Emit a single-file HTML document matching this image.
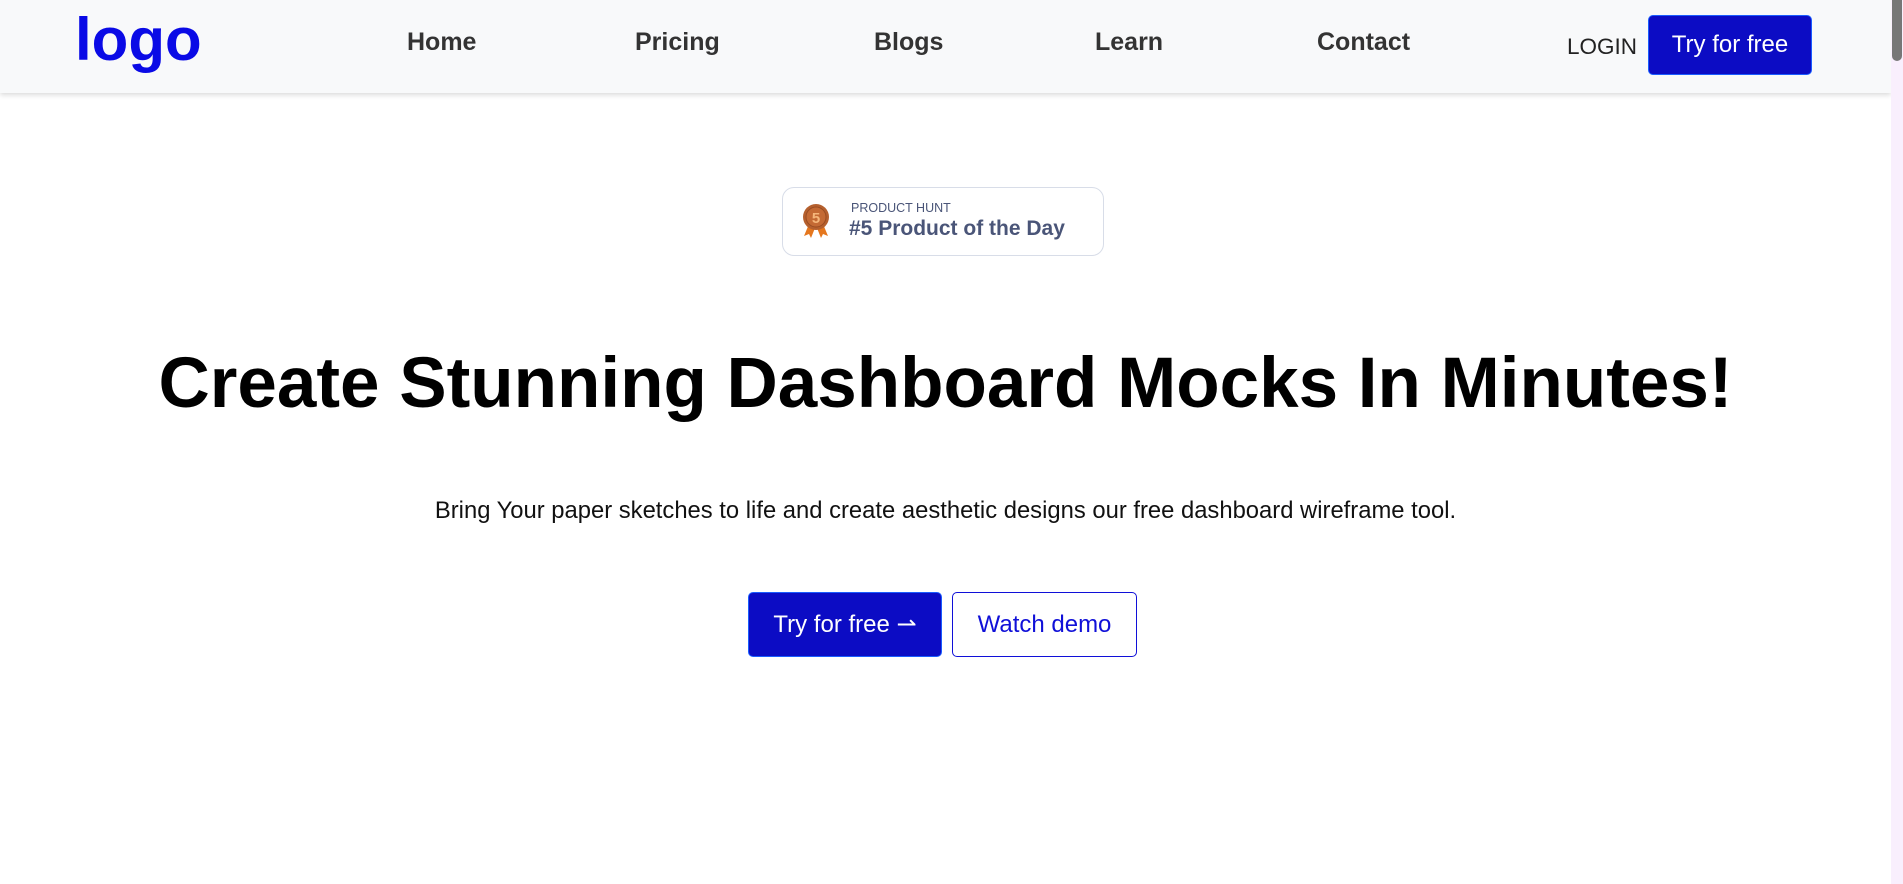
<!DOCTYPE html>
<html><head><meta charset="utf-8"><style>
*{margin:0;padding:0;box-sizing:border-box}
body{width:1903px;height:884px;overflow:hidden;background:#fff;font-family:"Liberation Sans",sans-serif;position:relative}
.nav{position:absolute;left:0;top:0;width:1891px;height:93px;background:#f8f9fa;box-shadow:0 2px 5px rgba(0,0,0,.15)}
.sb{position:absolute;right:0;top:0;width:12px;height:884px;background:#f9effd}
.sb div{position:absolute;left:1px;top:0;width:10px;height:61px;background:#777;border-radius:0 0 5px 5px}
.logo{position:absolute;left:75px;top:5px;font-size:60px;font-weight:bold;color:#0a0ae6}
.ni{position:absolute;top:28px;font-size:25px;font-weight:bold;color:#333}
.login{position:absolute;left:1567px;top:34px;font-size:22.5px;color:#222}
.btn{position:absolute;background:#0c0cc4;color:#fff;border:1px solid #1a5cff;border-radius:5px;display:flex;align-items:center;justify-content:center;font-size:24px}
.badge{position:absolute;left:782px;top:187px;width:322px;height:69px;border:1.5px solid #d8dde8;border-radius:12px}
h1{position:absolute;left:0;width:1891px;top:343px;text-align:center;font-size:71px;font-weight:bold;color:#000}
.sub{position:absolute;left:0;width:1891px;top:497px;text-align:center;font-size:23.8px;color:#111}
</style></head><body>
<div class="nav">
<div class="logo">logo</div>
<div class="ni" style="left:407px">Home</div>
<div class="ni" style="left:635px">Pricing</div>
<div class="ni" style="left:874px">Blogs</div>
<div class="ni" style="left:1095px">Learn</div>
<div class="ni" style="left:1317px">Contact</div>
<div class="login">LOGIN</div>
<div class="btn" style="left:1648px;top:15px;width:164px;height:60px">Try for free</div>
</div>
<div class="sb"><div></div></div>
<div class="badge">
<svg style="position:absolute;left:18px;top:14px" width="30" height="38" viewBox="0 0 30 38">
<path d="M8 22 L3 34 L8 32 L10 36 L14 26Z M22 22 L27 34 L22 32 L20 36 L16 26Z" fill="#e5771e"/>
<circle cx="15" cy="15" r="13" fill="#b5602e"/><circle cx="15" cy="15" r="10" fill="#c46a34" stroke="#9a4c22" stroke-width="1"/>
<text x="15" y="21" text-anchor="middle" font-size="15" font-weight="bold" fill="#f5b67a" font-family="Liberation Sans">5</text>
</svg>
<div style="position:absolute;left:68px;top:13px;font-size:12.5px;color:#4a5578">PRODUCT HUNT</div>
<div style="position:absolute;left:66px;top:29px;font-size:21px;font-weight:bold;color:#4a5578">#5 Product of the Day</div>
</div>
<h1>Create Stunning Dashboard Mocks In Minutes!</h1>
<div class="sub">Bring Your paper sketches to life and create aesthetic designs our free dashboard wireframe tool.</div>
<div class="btn" style="left:748px;top:592px;width:194px;height:65px">Try for free ⇀</div>
<div class="btn" style="left:952px;top:592px;width:185px;height:65px;background:#fff;color:#1010d8;border-color:#1010d8">Watch demo</div>
</body></html>
